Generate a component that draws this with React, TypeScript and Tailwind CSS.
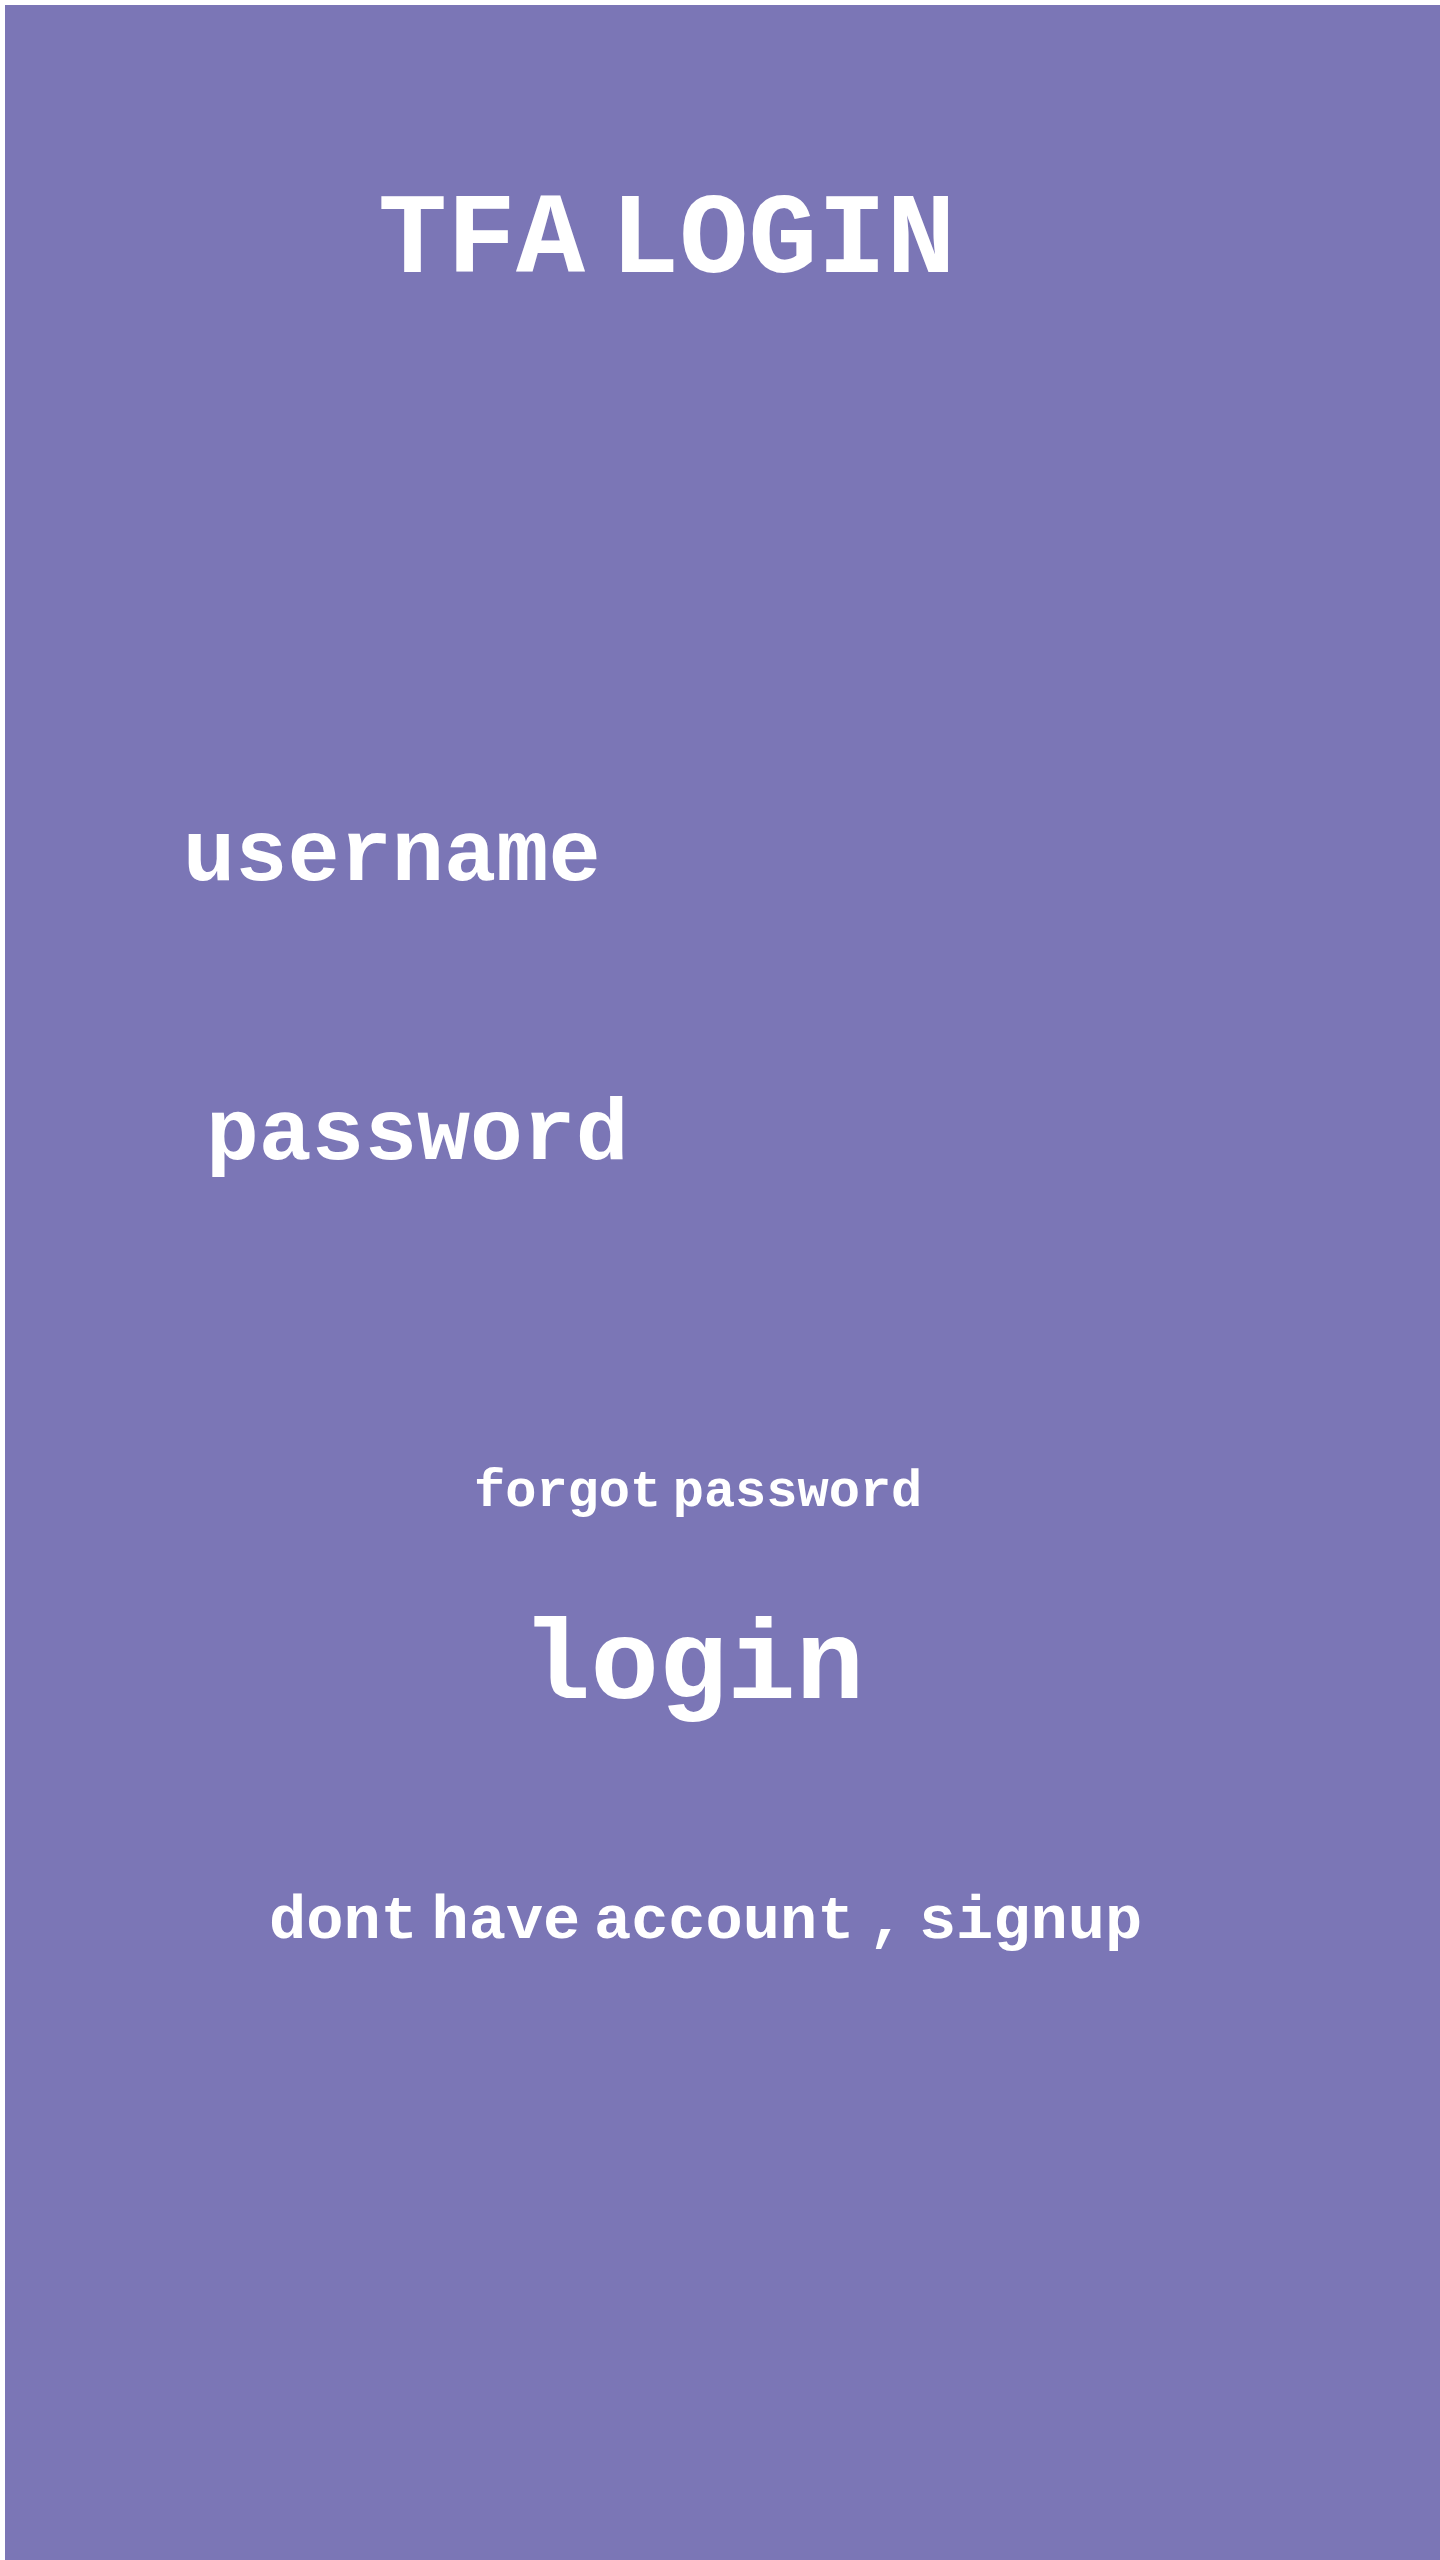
const line = "font-['Liberation_Mono',monospace] font-bold text-white leading-none whitespace-nowrap [word-spacing:-0.38em]";

const App = () => {
  return (
    <div className="min-h-[2560px] bg-white pt-[5px] pl-[5px]">
      <div className="h-[2555px] w-[1435px] bg-[#7b76b6] pt-[179px]">
        {/* title */}
        <h1 className={`${line} pl-[373px] text-[115px]`}>TFA LOGIN</h1>

        {/* fields */}
        <div className={`${line} mt-[515px] pl-[178px] text-[87px]`}>username</div>
        <div className={`${line} mt-[191px] pl-[201px] text-[88px]`}>password</div>

        <div className={`${line} mt-[287px] pl-[469px] text-[52px]`}>
          forgot password
        </div>

        <button className={`${line} mt-[92px] ml-[517px] block text-[114px]`}>
          login
        </button>

        <div className={`${line} mt-[166px] pl-[264px] text-[62px]`}>
          dont have account , signup
        </div>
      </div>
    </div>
  );
};

export default App;
